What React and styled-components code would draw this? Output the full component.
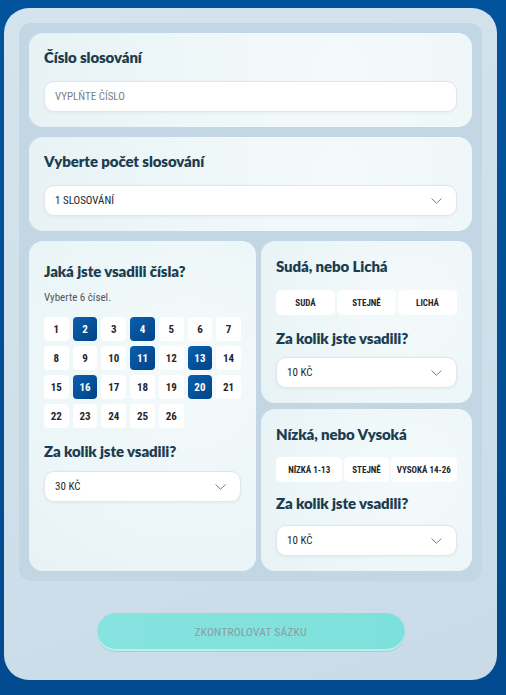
import React from "react";
import styled, { createGlobalStyle } from "styled-components";

const COND = `"Roboto Condensed", "Liberation Sans Narrow", "DejaVu Sans Condensed", Roboto, sans-serif`;
const TITLE = `Lato, "Noto Sans", sans-serif`;

const GlobalStyle = createGlobalStyle`
  html, body { margin: 0; padding: 0; background: #02509a; }
  body { font-family: ${TITLE}; }
  * { box-sizing: border-box; }
`;

const Page = styled.div`
  width: 506px;
  height: 695px;
  padding: 8px 9px 15px 4px;
  background: linear-gradient(180deg, #02539d 0%, #024a90 100%);
`;

const Shell = styled.div`
  height: 100%;
  border-radius: 25px;
  background: linear-gradient(160deg, #d3e4ee 0%, #cfe0eb 50%, #c8dbe7 100%);
  padding: 15px;
  display: flex;
  flex-direction: column;
`;

const Panel = styled.div`
  background: #c3d6e3;
  border-radius: 12px;
  padding: 10px;
  display: flex;
  flex-direction: column;
  gap: 10px;
`;

const Card = styled.section`
  background: radial-gradient(circle at 70% 40%, #f4fafb 0%, #edf6f8 55%, #e8f2f5 100%);
  border-radius: 14px;
  padding: ${(p) => p.$pad || "14px 15px 15px"};
  display: flex;
  flex-direction: column;
  flex: ${(p) => (p.$grow ? 1 : "none")};
`;

const Title = styled.h2`
  margin: 0 0 ${(p) => (p.$mb == null ? 14 : p.$mb)}px;
  font-family: ${TITLE};
  font-weight: 800;
  font-size: 15px;
  line-height: 20px;
  letter-spacing: -0.1px;
  color: #1c3d50;
`;

const Field = styled.div`
  height: 31px;
  flex: none;
  border-radius: 10px;
  background: #fff;
  border: 1px solid #e4e4ec;
  box-shadow: 0 1px 3px rgba(40, 70, 90, 0.06);
  display: flex;
  align-items: center;
  justify-content: space-between;
  padding: 0 14px 0 10px;
  font-family: ${COND};
  font-size: 11px;
  color: ${(p) => (p.$placeholder ? "#7a7f86" : "#22272c")};
  text-transform: uppercase;
`;

const Row = styled.div`
  display: grid;
  grid-template-columns: 227px 1fr;
  gap: 5px;
`;

const Column = styled.div`
  display: flex;
  flex-direction: column;
  gap: 6px;
`;

const Hint = styled.p`
  margin: 0 0 13px;
  font-family: ${COND};
  font-size: 11px;
  line-height: 13px;
  color: #4d5560;
`;

const NumberGrid = styled.div`
  display: grid;
  grid-template-columns: repeat(7, 1fr);
  column-gap: 4px;
  row-gap: 5px;
  margin-bottom: 13px;
`;

const Cell = styled.div`
  height: 24px;
  border-radius: 4px;
  display: flex;
  align-items: center;
  justify-content: center;
  font-family: ${COND};
  font-weight: 700;
  font-size: 11px;
  color: ${(p) => (p.$on ? "#fff" : "#1f262d")};
  background: ${(p) =>
    p.$on ? "linear-gradient(135deg, #0c5fae 0%, #004386 100%)" : "#fff"};
`;

const Options = styled.div`
  display: grid;
  grid-template-columns: ${(p) => p.$cols};
  gap: 2px;
  margin-bottom: ${(p) => p.$mb}px;
`;

const Option = styled.div`
  height: 25px;
  border-radius: 5px;
  background: #fff;
  display: flex;
  align-items: center;
  justify-content: center;
  font-family: ${COND};
  font-weight: 700;
  font-size: 9px;
  color: #1f262d;
  white-space: nowrap;
`;

const Footer = styled.div`
  flex: 1;
  display: flex;
  justify-content: center;
  padding-top: 32px;
`;

const Submit = styled.button`
  width: 308px;
  height: 38px;
  border: none;
  border-radius: 19px;
  background: linear-gradient(90deg, #86e3df 0%, #7ee0dc 100%);
  box-shadow: inset 0 -2px 0 rgba(255, 255, 255, 0.45), 0 1px 0 rgba(90, 190, 190, 0.4);
  font-family: ${COND};
  font-size: 11.5px;
  letter-spacing: 0.2px;
  color: #8a9da4;
  text-transform: uppercase;
  cursor: not-allowed;
`;

const Chevron = () => (
  <svg width="11" height="6" viewBox="0 0 11 6" fill="none">
    <path d="M0.5 0.5L5.5 5.2L10.5 0.5" stroke="#6d8291" strokeWidth="1" />
  </svg>
);

const Select = ({ value }) => (
  <Field>
    <span>{value}</span>
    <Chevron />
  </Field>
);

const selected = new Set([2, 4, 11, 13, 16, 20]);

export default function App() {
  return (
    <>
      <GlobalStyle />
      <Page>
        <Shell>
          <Panel>
            <Card>
              <Title>Číslo slosování</Title>
              <Field $placeholder>Vyplňte číslo</Field>
            </Card>
            <Card>
              <Title>Vyberte počet slosování</Title>
              <Select value="1 slosování" />
            </Card>
            <Row>
              <Card $pad="20px 15px 15px">
                <Title $mb={10}>Jaká jste vsadili čísla?</Title>
                <Hint>Vyberte 6 čísel.</Hint>
                <NumberGrid>
                  {Array.from({ length: 26 }, (_, i) => i + 1).map((n) => (
                    <Cell key={n} $on={selected.has(n)}>
                      {n}
                    </Cell>
                  ))}
                </NumberGrid>
                <Title $mb={10}>Za kolik jste vsadili?</Title>
                <Select value="30 Kč" />
              </Card>
              <Column>
                <Card $grow $pad="15px 15px 15px">
                  <Title>Sudá, nebo Lichá</Title>
                  <Options $cols="1fr 1fr 1fr" $mb={13}>
                    <Option>SUDÁ</Option>
                    <Option>STEJNĚ</Option>
                    <Option>LICHÁ</Option>
                  </Options>
                  <Title $mb={9}>Za kolik jste vsadili?</Title>
                  <Select value="10 Kč" />
                </Card>
                <Card $grow $pad="15px 15px 15px">
                  <Title $mb={13}>Nízká, nebo Vysoká</Title>
                  <Options $cols="66fr 44fr 66fr" $mb={11}>
                    <Option>NÍZKÁ 1-13</Option>
                    <Option>STEJNĚ</Option>
                    <Option>VYSOKÁ 14-26</Option>
                  </Options>
                  <Title $mb={12}>Za kolik jste vsadili?</Title>
                  <Select value="10 Kč" />
                </Card>
              </Column>
            </Row>
          </Panel>
          <Footer>
            <Submit disabled>Zkontrolovat sázku</Submit>
          </Footer>
        </Shell>
      </Page>
    </>
  );
}
